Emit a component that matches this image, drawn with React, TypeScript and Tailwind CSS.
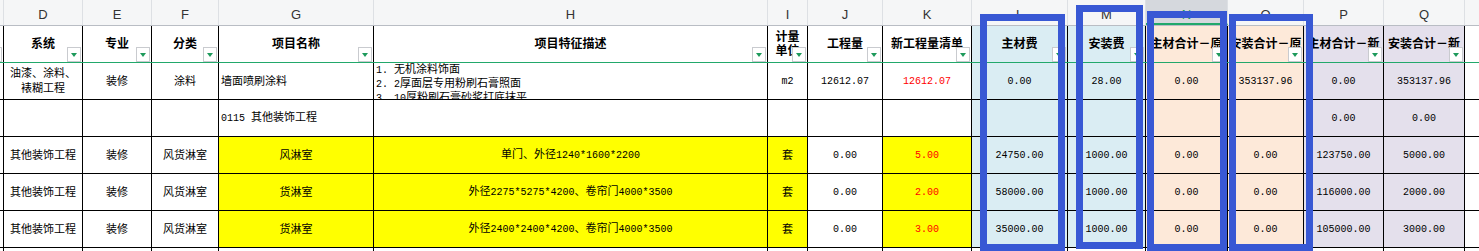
import React from 'react'

type Cell = { text?: string; align?: 'left' | 'center'; red?: boolean; yellow?: boolean; multi?: boolean }

const COLS = [
  { id: 'C', w: 'w-[4px]' },
  { id: 'D', w: 'w-[79px]' },
  { id: 'E', w: 'w-[69px]' },
  { id: 'F', w: 'w-[67px]' },
  { id: 'G', w: 'w-[155px]' },
  { id: 'H', w: 'w-[394px]' },
  { id: 'I', w: 'w-[40px]' },
  { id: 'J', w: 'w-[75px]' },
  { id: 'K', w: 'w-[89px]' },
  { id: 'L', w: 'w-[96px]' },
  { id: 'M', w: 'w-[78px]' },
  { id: 'N', w: 'w-[82px]' },
  { id: 'O', w: 'w-[76px]' },
  { id: 'P', w: 'w-[80px]' },
  { id: 'Q', w: 'w-[81px]' },
]

const TINT: Record<string, string> = {
  L: 'bg-[#daedf3]',
  M: 'bg-[#daedf3]',
  N: 'bg-[#fde9d9]',
  O: 'bg-[#fde9d9]',
  P: 'bg-[#e4e0ec]',
  Q: 'bg-[#e4e0ec]',
}

const HEADERS: Record<string, string> = {
  D: '系统',
  E: '专业',
  F: '分类',
  G: '项目名称',
  H: '项目特征描述',
  I: '计量\n单位',
  J: '工程量',
  K: '新工程量清单',
  L: '主材费',
  M: '安装费',
  N: '主材合计－原',
  O: '安装合计－原',
  P: '主材合计－新',
  Q: '安装合计－新',
}

function shed(name: string, desc: string, red: string, l: string, p: string, q: string): Record<string, Cell> {
  return {
    D: { text: '其他装饰工程' },
    E: { text: '装修' },
    F: { text: '风货淋室' },
    G: { text: name, yellow: true },
    H: { text: desc, yellow: true },
    I: { text: '套', yellow: true },
    J: { text: '0.00' },
    K: { text: red, red: true, yellow: true },
    L: { text: l },
    M: { text: '1000.00' },
    N: { text: '0.00' },
    O: { text: '0.00' },
    P: { text: p },
    Q: { text: q },
  }
}

const ROWS: Record<string, Cell>[] = [
  {
    D: { text: '油漆、涂料、\n裱糊工程' },
    E: { text: '装修' },
    F: { text: '涂料' },
    G: { text: '墙面喷刷涂料', align: 'left' },
    H: { text: '1. 无机涂料饰面\n2. 2厚面层专用粉刷石膏照面\n3. 10厚粉刷石膏砂浆打底抹平', multi: true },
    I: { text: 'm2' },
    J: { text: '12612.07' },
    K: { text: '12612.07', red: true },
    L: { text: '0.00' },
    M: { text: '28.00' },
    N: { text: '0.00' },
    O: { text: '353137.96' },
    P: { text: '0.00' },
    Q: { text: '353137.96' },
  },
  {
    G: { text: '0115 其他装饰工程', align: 'left' },
    P: { text: '0.00' },
    Q: { text: '0.00' },
  },
  shed('风淋室', '单门、外径1240*1600*2200', '5.00', '24750.00', '123750.00', '5000.00'),
  shed('货淋室', '外径2275*5275*4200、卷帘门4000*3500', '2.00', '58000.00', '116000.00', '2000.00'),
  shed('货淋室', '外径2400*2400*4200、卷帘门4000*3500', '3.00', '35000.00', '105000.00', '3000.00'),
  {},
]

// latin runs go in the mono face, like the sheet's bitmap font
function Mixed({ text }: { text: string }) {
  const parts = text.split(/([\x20-\x7e]+)/).filter(Boolean)
  return (
    <>
      {parts.map((p, i) =>
        /^[\x20-\x7e]+$/.test(p) ? (
          <span key={i} className="font-['Liberation_Mono',monospace] text-[10px] whitespace-pre">{p}</span>
        ) : (
          <span key={i}>{p}</span>
        )
      )}
    </>
  )
}

function FilterButton() {
  return (
    <div className="absolute right-[1px] bottom-0 w-[14px] h-[15px] bg-white border border-[#c9cbcf] flex items-center justify-center">
      <div className="w-0 h-0 border-l-[3px] border-r-[3px] border-t-[4px] border-l-transparent border-r-transparent border-t-[#1d9a5b]" />
    </div>
  )
}

function BlueBox({ pos }: { pos: string }) {
  return <div className={`absolute border-[7px] border-[#3858d4] ${pos}`} />
}

export default function App() {
  return (
    <div className="relative h-[251px] w-[1479px] overflow-hidden bg-white font-['Liberation_Sans','Noto_Sans_CJK_SC',sans-serif] text-[11px] text-black">
      {/* 列标 */}
      <div className="flex h-[26px] bg-[#f5f6f7] border-b border-[#b9bdc4]">
        {COLS.map(c => (
          <div
            key={c.id}
            className={`${c.w} flex-shrink-0 border-r border-[#dde0e4] flex justify-center pt-[5px] text-[13px] ${
              c.id === 'N' ? 'bg-[#d5d8dd] text-[#1d9a5b] border-b-2 border-b-[#22a86b]' : 'text-[#333]'
            }`}
          >
            {c.id === 'C' ? '' : c.id}
          </div>
        ))}
        <div className="flex-1" />
      </div>

      {/* 表头 */}
      <div className="flex h-[37px] border-b border-[#22a86b]">
        {COLS.map(c => (
          <div
            key={c.id}
            className={`${c.w} flex-shrink-0 relative border-r border-black flex items-center justify-center overflow-hidden font-bold text-[12px] leading-[14px] text-center whitespace-pre ${TINT[c.id] ?? 'bg-white'}`}
          >
            {c.id === 'C' ? (
              <div className="absolute left-0 bottom-0 w-[2px] h-[15px] border-y border-r border-[#c9cbcf] bg-white" />
            ) : (
              <>
                <span>{HEADERS[c.id]}</span>
                <FilterButton />
              </>
            )}
          </div>
        ))}
        <div className="flex-1" />
      </div>

      {/* 数据行 */}
      {ROWS.map((row, ri) => (
        <div key={ri} className="flex h-[37px] border-b border-black">
          {COLS.map(c => {
            const cell = row[c.id]
            const bg = cell?.yellow ? 'bg-[#ffff00]' : ri < 5 && TINT[c.id] ? TINT[c.id] : 'bg-white'
            if (cell?.multi) {
              return (
                <div key={c.id} className={`${c.w} flex-shrink-0 border-r border-black overflow-hidden pl-[2px] leading-[13px] whitespace-pre ${bg}`}>
                  {cell.text!.split('\n').map((line, i) => (
                    <div key={i}>
                      <Mixed text={line} />
                    </div>
                  ))}
                </div>
              )
            }
            return (
              <div
                key={c.id}
                className={`${c.w} flex-shrink-0 border-r border-black overflow-hidden flex items-center leading-[15px] whitespace-pre ${
                  cell?.align === 'left' ? 'justify-start pl-[2px]' : 'justify-center text-center'
                } ${cell?.red ? 'text-[#ff0000]' : ''} ${bg}`}
              >
                {cell?.text && (
                  <div>
                    {cell.text.split('\n').map((line, i) => (
                      <div key={i}>
                        <Mixed text={line} />
                      </div>
                    ))}
                  </div>
                )}
              </div>
            )
          })}
          <div className="flex-1" />
        </div>
      ))}

      {/* 标注框 */}
      <BlueBox pos="left-[980px] top-[14px] w-[85px] h-[237px]" />
      <BlueBox pos="left-[1076px] top-[5px] w-[67px] h-[244px]" />
      <BlueBox pos="left-[1147px] top-[11px] w-[80px] h-[240px]" />
      <BlueBox pos="left-[1229px] top-[14px] w-[84px] h-[237px]" />
    </div>
  )
}
